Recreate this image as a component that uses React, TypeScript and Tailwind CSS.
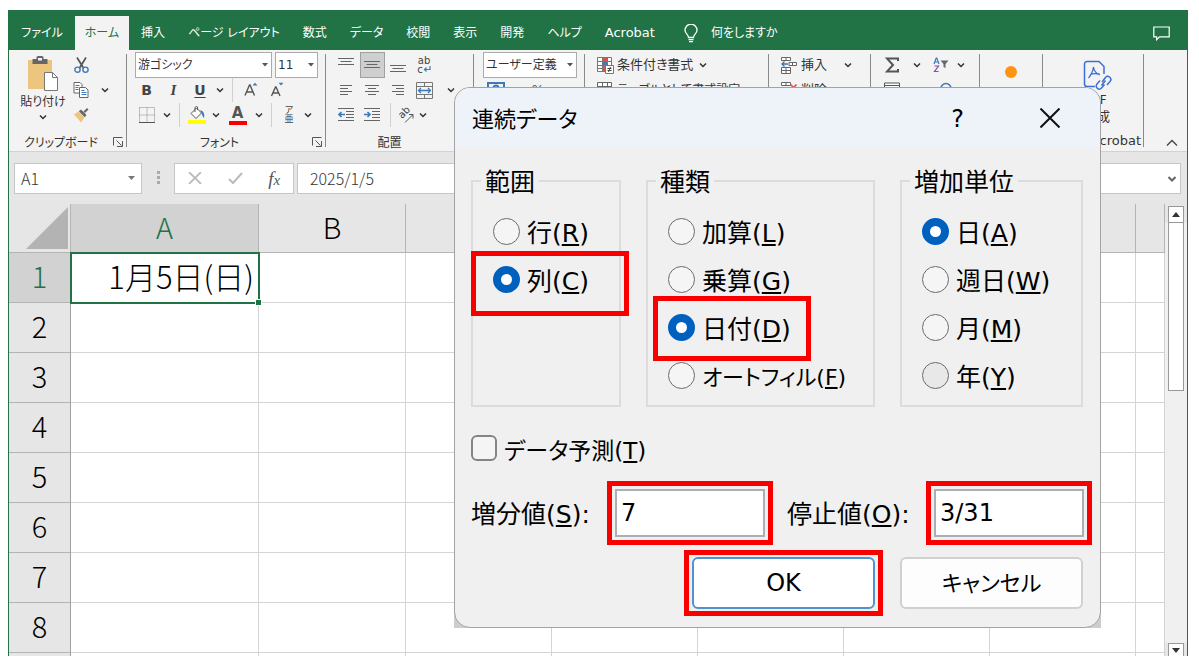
import { ReactNode, useState } from 'react';

const TABS = ['挿入', 'ページ レイアウト', '数式', 'データ', '校閲', '表示', '開発', 'ヘルプ'];
const COLUMNS = ['A', 'B', 'C', 'D', 'E', 'F', 'G', 'H'];
const ROWS = [1, 2, 3, 4, 5, 6, 7, 8, 9];

const RANGE_OPTIONS = [
  { label: '行', accessKey: 'R' },
  { label: '列', accessKey: 'C', marked: true },
];
const TYPE_OPTIONS = [
  { label: '加算', accessKey: 'L' },
  { label: '乗算', accessKey: 'G' },
  { label: '日付', accessKey: 'D', marked: true },
  { label: 'オートフィル', accessKey: 'F', kana: true },
];
const UNIT_OPTIONS = [
  { label: '日', accessKey: 'A' },
  { label: '週日', accessKey: 'W' },
  { label: '月', accessKey: 'M' },
  { label: '年', accessKey: 'Y' },
];

interface Option {
  label: string;
  accessKey: string;
  marked?: boolean;
  kana?: boolean;
}

const Chevron = () => (
  <svg className="w-[14px] shrink-0" height="10" viewBox="0 0 14 10" fill="none" stroke="#333" strokeWidth="1.5">
    <path d="M4 3.5 7 6.5 10 3.5" />
  </svg>
);

const Divider = () => <span className="mx-[5px] h-6 w-px shrink-0 bg-[#d0d0d0]" />;

const Separator = () => <span className="my-1 w-px shrink-0 bg-[#8a8a8a]" />;

const IconButton = ({ label, width = 'w-[26px]', children }: { label: string; width?: string; children: ReactNode }) => (
  <button type="button" aria-label={label} className={`flex h-full shrink-0 items-center justify-center ${width}`}>
    {children}
  </button>
);

const Launcher = () => (
  <svg className="mr-[3px] shrink-0" width="10" height="10" viewBox="0 0 10 10" fill="none" stroke="#555">
    <path d="M.5 8.5v-8h9M3.5 3.5l5 5M9.5 4v5.5H4" />
  </svg>
);

const GroupLabel = ({ text, launcher }: { text: string; launcher?: boolean }) => (
  <div className="mt-1 flex h-5 items-center text-[12px]">
    <span className="flex-1 pt-px text-center whitespace-nowrap">{text}</span>
    {launcher ? <Launcher /> : <span className="w-5" />}
  </div>
);

const RibbonSelect = ({ label, value, className }: { label: string; value: string; className: string }) => (
  <div className={`relative h-[26px] shrink-0 ${className}`}>
    <select aria-label={label} className="h-full w-full appearance-none border border-[#ababab] bg-white pl-[2px] text-[12px]">
      <option>{value}</option>
    </select>
    <svg className="pointer-events-none absolute top-[11px] right-[4px]" width="6" height="4" viewBox="0 0 6 4">
      <path d="M0 0h6L3 3.5z" fill="#555" />
    </svg>
  </div>
);

const Lines = ({ d }: { d: string }) => (
  <svg width="16" height="16" viewBox="0 0 16 16" stroke="#666" fill="none">
    <path d={d} />
  </svg>
);

/* 操作箇所を示す赤枠 */
const Mark = ({ className }: { className: string }) => (
  <span className={`pointer-events-none absolute z-10 border-[5px] border-[#f80000] ${className}`} />
);

const TabBar = () => (
  <nav className="flex h-10 shrink-0 items-end bg-[#217346] text-[12px] text-white">
    <a href="#file" className="flex h-[34px] w-[66px] items-center justify-center">ファイル</a>
    <a href="#home" className="flex h-[34px] w-[54px] items-center justify-center bg-[#f3f3f3] text-[#217346]">ホーム</a>
    <div className="flex h-[34px] items-center gap-[23px] pl-3 whitespace-nowrap">
      {TABS.map((tab) => (
        <a key={tab} href={`#${tab}`}>{tab}</a>
      ))}
      <a href="#acrobat" className="text-[13px]">Acrobat</a>
    </div>
    <label className="ml-[29px] flex h-[34px] items-center gap-[13px]">
      <svg width="14" height="19" viewBox="0 0 14 19" fill="none" stroke="#fff" strokeWidth="1.3">
        <path d="M4.5 13.5c0-3-3.500-3.800-3.500-7.300a6 6 0 0 1 12 0c0 3.500-3.500 4.300-3.500 7.300zM4.500 15.700h5M5 17.700h4" />
      </svg>
      <input aria-label="操作アシスト" className="w-24 placeholder:text-white placeholder:opacity-100" placeholder="何をしますか" />
    </label>
    <button type="button" aria-label="コメント" className="mr-[17px] ml-auto flex h-[34px] items-center">
      <svg width="17" height="15" viewBox="0 0 17 15" fill="none" stroke="#fff" strokeWidth="1.2">
        <path d="M.8 1h15.400v9.800H6.500L3.600 13.700v-2.900H.8z" />
      </svg>
    </button>
  </nav>
);

const ClipboardGroup = () => (
  <div className="w-[117px] shrink-0 pt-[2px]">
    <div className="flex h-[76px]">
      <button type="button" className="ml-[9px] flex w-[50px] flex-col items-center pt-1 text-[12px] whitespace-nowrap">
        <svg width="32" height="36" viewBox="0 0 32 36">
          <path d="M1 4h24v29H1z" fill="#ecc57f" />
          <path d="M5.500 3h4V1.500a1.500 1.500 0 0 1 1.500-1.500h4a1.500 1.500 0 0 1 1.500 1.500V3h4v5h-15z" fill="#666" />
          <path d="M11 2h4v2.500h-4z" fill="#f3f3f3" />
          <path d="M17.500 16.500h8l5 5v13h-13z" fill="#fff" stroke="#777" />
          <path d="M25.500 16.500v5h5" fill="none" stroke="#777" />
        </svg>
        <span className="leading-5">貼り付け</span>
        <Chevron />
      </button>
      <div className="flex flex-col">
        <div className="h-[26px]">
          <IconButton label="切り取り">
            <svg width="15" height="16" viewBox="0 0 15 16" fill="none">
              <path d="M3 .5 9.500 11M12 .5 5.500 11" stroke="#555" strokeWidth="1.700" />
              <circle cx="3.500" cy="12.700" r="2.600" stroke="#3d7ab8" strokeWidth="1.400" />
              <circle cx="11.500" cy="12.700" r="2.600" stroke="#3d7ab8" strokeWidth="1.400" />
            </svg>
          </IconButton>
        </div>
        <div className="flex h-6 items-center">
          <IconButton label="コピー">
            <svg width="16" height="16" viewBox="0 0 16 16" fill="#fff" stroke="#666">
              <path d="M1 .5h6l2 2V11H1z" />
              <path d="M6.500 5.500h6l2.500 2.500v7.500H6.500z" />
              <path d="M2.500 3.500h4M2.500 5.500h3M2.500 7.500h3M8.500 8.500h3M8.500 10.500h5M8.500 12.500h5" stroke="#3d7ab8" />
            </svg>
          </IconButton>
          <span className="ml-1 flex"><Chevron /></span>
        </div>
        <div className="h-[26px]">
          <IconButton label="書式のコピー/貼り付け">
            <svg width="16" height="16" viewBox="0 0 16 16">
              <path d="M1 7.500 5.500 4.500l6 6L8 15.500C6 13 3.500 10 1 7.500z" fill="#ecc57f" />
              <path d="M5.800 4.200 8 2.500l5.500 5.500-1.700 2.200z" fill="#666" />
              <path d="M10.500 4.500 14 1l1.500 1.500L12 6z" fill="#666" />
            </svg>
          </IconButton>
        </div>
      </div>
    </div>
    <GroupLabel text="クリップボード" launcher />
  </div>
);

const FontGroup = () => (
  <div className="w-[198px] shrink-0 pt-[2px]">
    <div className="flex h-[26px] gap-[3px] pl-2">
      <RibbonSelect label="フォント名" value="游ゴシック" className="w-[137px]" />
      <RibbonSelect label="フォント サイズ" value="11" className="w-[43px]" />
    </div>
    <div className="flex h-6 items-center pl-[6px] text-[14px] font-bold text-[#444]">
      <IconButton label="太字" width="w-[27px]">B</IconButton>
      <IconButton label="斜体" width="w-[27px]"><i className="font-['Liberation_Serif',serif] text-[15px]">I</i></IconButton>
      <IconButton label="下線"><u className="underline-offset-2">U</u></IconButton>
      <Chevron />
      <Divider />
      <IconButton label="フォント サイズの拡大">
        <svg width="16" height="16" viewBox="0 0 16 16" fill="none" stroke="#555" strokeWidth="1.400">
          <path d="M2 13.500 6.500 3h.5l4.500 10.500M3.500 10h6.500" />
          <path d="m9.500 3.500 2.500-2.800 2.500 2.800z" fill="#3d7ab8" stroke="none" />
        </svg>
      </IconButton>
      <IconButton label="フォント サイズの縮小">
        <svg width="16" height="16" viewBox="0 0 16 16" fill="none" stroke="#555" strokeWidth="1.400">
          <path d="M2.500 14 6.500 5h.5l4 9M4 11h5.500" />
          <path d="m9.500.700 2.500 2.800 2.500-2.800z" fill="#3d7ab8" stroke="none" />
        </svg>
      </IconButton>
    </div>
    <div className="flex h-[26px] items-center pl-[6px]">
      <IconButton label="罫線" width="w-[27px]">
        <svg width="16" height="16" viewBox="0 0 16 16" fill="none" stroke="#888">
          <path d="M.5.5h15v15M.5.5v15M8 .5v15M.5 8h15" strokeDasharray="1 1" />
          <path d="M0 15.500h16" stroke="#555" />
        </svg>
      </IconButton>
      <Chevron />
      <Divider />
      <IconButton label="塗りつぶしの色" width="w-[24px]">
        <svg width="18" height="18" viewBox="0 0 18 18" fill="none">
          <path d="M3 7.500 8.500 2l5 5-5.500 5.500z" fill="#fff" stroke="#555" />
          <path d="M7 6V1.500A1.500 1.500 0 0 1 9.500 1v3" stroke="#555" />
          <path d="M12 4.500c3 0 5 2.500 4 7.500-1.500-1-1.500-3-2.500-5z" fill="#3d7ab8" />
          <path d="M0 14h18v4H0z" fill="#ffff00" />
        </svg>
      </IconButton>
      <Chevron />
      <IconButton label="フォントの色" width="w-[29px]">
        <span className="w-[18px] border-b-4 border-[#f80000] text-center text-[15px] leading-[15px] font-bold text-[#555]">A</span>
      </IconButton>
      <Chevron />
      <Divider />
      <IconButton label="ふりがなの表示/非表示" width="w-[24px]">
        <span className="flex flex-col text-[9px] leading-[9px] text-[#444]"><span>ア</span><span>亜</span></span>
      </IconButton>
      <Chevron />
    </div>
    <GroupLabel text="フォント" launcher />
  </div>
);

const AlignGroup = () => (
  <div className="w-[147px] shrink-0 pt-[2px]">
    <div className="flex h-[26px] items-center pl-[7px]">
      <IconButton label="上揃え"><Lines d="M0 1.500h16M2.500 4.500h11M0 7.500h16" /></IconButton>
      <IconButton label="上下中央揃え">
        <span className="flex h-[26px] w-[25px] items-center justify-center border border-[#a0a0a0] bg-[#cfcfcf]">
          <Lines d="M0 4.500h16M2.500 7.500h11M0 10.500h16" />
        </span>
      </IconButton>
      <IconButton label="下揃え"><Lines d="M0 8.500h16M2.500 11.500h11M0 14.500h16" /></IconButton>
      <IconButton label="折り返して全体を表示する">
        <span className="flex flex-col text-[10px] leading-[9px] text-[#444]">
          <span>ab</span>
          <span className="flex">
            c
            <svg width="8" height="8" viewBox="0 0 8 8" fill="none" stroke="#3d7ab8" strokeWidth="1.200">
              <path d="M7 1v3.500H1.500M3.500 2.500l-2 2 2 2" />
            </svg>
          </span>
        </span>
      </IconButton>
    </div>
    <div className="flex h-6 items-center pl-[7px]">
      <IconButton label="左揃え"><Lines d="M2 3.500h12M2 6.500h8M2 9.500h12M2 12.500h8" /></IconButton>
      <IconButton label="中央揃え"><Lines d="M1 3.500h14M4 6.500h8M1 9.500h14M4 12.500h8" /></IconButton>
      <IconButton label="右揃え"><Lines d="M2 3.500h12M6 6.500h8M2 9.500h12M6 12.500h8" /></IconButton>
      <IconButton label="セルを結合して中央揃え">
        <svg width="17" height="17" viewBox="0 0 17 17" fill="none" stroke="#777">
          <path d="M.5.5h16v16H.5zM.5 4.500h16M.5 12.500h16M8.500.5v4M8.500 12.500v4" />
          <path d="M2.500 8.500h12M5 6 2.500 8.500 5 11M12 6l2.500 2.500L12 11" stroke="#3d7ab8" strokeWidth="1.300" />
        </svg>
      </IconButton>
      <span className="ml-[7px] flex"><Chevron /></span>
    </div>
    <div className="flex h-[26px] items-center pl-[7px]">
      <IconButton label="インデントを減らす">
        <svg width="16" height="16" viewBox="0 0 16 16" fill="none" stroke="#666">
          <path d="M0 1.500h16M8 4.500h8M8 7.500h8M8 10.500h8M0 13.500h16" />
          <path d="M7 7.500H1M3.500 5 1 7.500 3.500 10" stroke="#3d7ab8" strokeWidth="1.600" />
        </svg>
      </IconButton>
      <IconButton label="インデントを増やす">
        <svg width="16" height="16" viewBox="0 0 16 16" fill="none" stroke="#666">
          <path d="M0 1.500h16M8 4.500h8M8 7.500h8M8 10.500h8M0 13.500h16" />
          <path d="M0 7.500h6M3.500 5 6 7.500 3.500 10" stroke="#3d7ab8" strokeWidth="1.600" />
        </svg>
      </IconButton>
      <Divider />
      <IconButton label="方向" width="w-[20px]">
        <svg width="20" height="20" viewBox="0 0 20 20" fill="none" stroke="#555">
          <text x="0" y="0" transform="translate(6 14) rotate(-45)" fontSize="10" fill="#444" stroke="none">ab</text>
          <path d="M9 17.500 17 9.500M13 9.500h4v4" />
        </svg>
      </IconButton>
      <Chevron />
    </div>
    <GroupLabel text="配置" />
  </div>
);

const NumberGroup = () => (
  <div className="w-[110px] shrink-0 pt-[2px] pl-[9px]">
    <RibbonSelect label="数値の書式" value="ユーザー定義" className="w-[94px]" />
    <div className="flex h-6 items-center gap-4 text-[13px] text-[#555]">
      <IconButton label="通貨表示形式">
        <svg width="18" height="16" viewBox="0 0 18 16" fill="none" stroke="#3d7ab8" strokeWidth="2">
          <path d="M1 1h16v10H1z" />
          <circle cx="9" cy="6" r="2.500" />
        </svg>
      </IconButton>
      <IconButton label="パーセント スタイル">%</IconButton>
    </div>
  </div>
);

const TableIcon = () => (
  <svg width="17" height="17" viewBox="0 0 17 17" fill="#fff" stroke="#666">
    <path d="M.5.5h14v14H.5zM.5 4.500h14M.5 8.500h14M5.500.5v14M10.500.5v14" />
  </svg>
);

const StyleGroup = () => (
  <div className="w-[183px] shrink-0 pt-[2px] pl-3 text-[13px] whitespace-nowrap">
    <button type="button" className="flex h-[26px] items-center gap-[3px]">
      <svg width="17" height="17" viewBox="0 0 17 17" fill="#fff" stroke="#777">
        <path d="M.5.5h14v14H.5zM.5 4.500h14M.5 8.500h14M.5 11.500h5M5.500.5v14M10.500.5v14" />
        <path d="M6 1h4v3H6z" fill="#d9534a" stroke="none" />
        <path d="M6 5h4v3H6z" fill="#3d7ab8" stroke="none" />
        <path d="M6 9h2v5H6z" fill="#d9534a" stroke="none" />
        <path d="M8.500 8.500h8v8h-8z" />
        <path d="M10.500 11.500h4M10.500 13.500h4M13.500 10l-2 5" stroke="#444" />
      </svg>
      <span>条件付き書式</span>
      <Chevron />
    </button>
    <button type="button" className="flex h-6 items-center gap-[3px] text-[12px]">
      <TableIcon />
      <span>テーブルとして書式設定</span>
    </button>
  </div>
);

const CellsGroup = () => (
  <div className="w-[101px] shrink-0 pt-[2px] pl-3 text-[13px] whitespace-nowrap">
    <button type="button" className="flex h-[26px] items-center gap-1">
      <svg width="16" height="17" viewBox="0 0 16 17" fill="#fff" stroke="#666">
        <path d="M.5.5h9v3h-9zM5 .5v3M.5 10.500h9v6h-9zM5 10.500v6M.5 13.500h9" />
        <path d="M8 5.500h7.500v3H8zM11.500 5.500v3" />
        <path d="M7 7H1M3.500 4.500 1 7l2.500 2.500" fill="none" stroke="#3d7ab8" strokeWidth="1.400" />
      </svg>
      <span>挿入</span>
      <span className="ml-[10px] flex"><Chevron /></span>
    </button>
    <button type="button" className="flex h-6 items-center gap-1">
      <svg width="16" height="17" viewBox="0 0 16 17" fill="#fff" stroke="#666">
        <path d="M.5.5h9v3h-9zM5 .5v3M.5 10.500h9v6h-9zM5 10.500v6M.5 13.500h9" />
        <path d="m9.500 2.500 6 6M15.500 2.500l-6 6" fill="none" stroke="#d9534a" strokeWidth="1.600" />
      </svg>
      <span>削除</span>
    </button>
  </div>
);

const EditGroup = () => (
  <div className="w-[108px] shrink-0 pt-[2px] pl-2">
    <div className="flex h-[26px] items-center">
      <IconButton label="オート SUM">
        <svg width="14" height="16" viewBox="0 0 14 16" fill="none" stroke="#555" strokeWidth="2">
          <path d="M13 4V1.500H2L8 8l-6 6.500h11V12" />
        </svg>
      </IconButton>
      <span className="ml-[5px] flex"><Chevron /></span>
      <span className="ml-1 flex h-full">
        <IconButton label="並べ替えとフィルター">
          <svg width="16" height="16" viewBox="0 0 16 16" fill="none">
            <path d="M1 7 3.200 1h.6L6 7M1.800 5h3.400" stroke="#3d7ab8" strokeWidth="1.200" />
            <path d="M1.500 9H5.500L1.500 14.500h4" stroke="#8a4aa8" strokeWidth="1.200" />
            <path d="M7.500 3.500h8L12.500 7v4l-2-1V7z" fill="#666" />
          </svg>
        </IconButton>
      </span>
      <Chevron />
    </div>
    <div className="flex h-6 items-center gap-[27px]">
      <IconButton label="フィル">
        <svg width="16" height="16" viewBox="0 0 16 16" fill="#fff" stroke="#555">
          <path d="M.5 1h15v14H.5zM.5 3.500h15" />
          <path d="M8 5.500v7M5 9.500l3 3 3-3" stroke="#3d7ab8" fill="none" />
        </svg>
      </IconButton>
      <IconButton label="検索と選択">
        <svg width="16" height="16" viewBox="0 0 16 16" fill="none" stroke="#3d7ab8" strokeWidth="1.600">
          <circle cx="9" cy="6.500" r="5" />
          <path d="m5 10-4 4.500" />
        </svg>
      </IconButton>
    </div>
  </div>
);

const AcrobatGroup = () => (
  <div className="flex w-[100px] shrink-0 flex-col pt-[2px] text-[13px]">
    <button type="button" className="flex h-[76px] flex-col items-center gap-[1px] pt-2 pl-2">
      <svg className="shrink-0" width="29" height="31" viewBox="0 0 29 31" fill="none" stroke="#3c6fd6" strokeWidth="1.500">
        <path d="M12 26.500H4A2.500 2.500 0 0 1 1.500 24V4A2.500 2.500 0 0 1 4 1.500h12l5 5V14" />
        <path d="M10.500 7c-.5 4-2 7.500-5 11M10.500 7c.5 4 2.500 6.500 6.500 8M7 14.500c3-1.200 6-1.200 9.500-.5" strokeWidth="1.300" />
        <path d="m19 22 3.500-4.500a3 3 0 0 1 4.500 4L24 25M22.500 20.500l-4 5M21.500 24.500l-3 3.500a3 3 0 0 1-4.500-4l3-3.500" />
      </svg>
      <span className="pr-1 text-[12px] leading-4">PDF</span>
      <span className="leading-4">作成</span>
    </button>
    <div className="mt-1 flex h-5 items-center justify-end pr-[2px]">Adobe Acrobat</div>
  </div>
);

const Ribbon = () => (
  <div className="flex h-[102px] shrink-0 overflow-hidden border-b border-[#d2d2d2] bg-[#f3f3f3] text-[#333]">
    <ClipboardGroup />
    <Separator />
    <FontGroup />
    <Separator />
    <AlignGroup />
    <Separator />
    <NumberGroup />
    <Separator />
    <StyleGroup />
    <Separator />
    <CellsGroup />
    <Separator />
    <EditGroup />
    <Separator />
    <div className="flex w-[62px] shrink-0 justify-center pt-4">
      <span className="size-3 rounded-full bg-[#ff9410]" />
    </div>
    <Separator />
    <AcrobatGroup />
    <Separator />
    <button type="button" aria-label="リボンを折りたたむ" className="mr-[9px] mb-1 ml-auto self-end">
      <svg width="12" height="8" viewBox="0 0 12 8" fill="none" stroke="#444" strokeWidth="1.300">
        <path d="m1 6.500 5-5 5 5" />
      </svg>
    </button>
  </div>
);

const FormulaBar = () => (
  <div className="flex h-[52px] shrink-0 items-center bg-[#e6e6e6] pr-[6px] pl-[5px] font-['Noto_Sans_CJK_JP',sans-serif] text-[16px] font-light text-[#333] [font-feature-settings:normal]">
    <div className="relative h-[31px] w-32 shrink-0">
      <input aria-label="名前ボックス" defaultValue="A1" className="h-full w-full border border-[#c6c6c6] bg-white pl-[6px]" />
      <svg className="pointer-events-none absolute top-[13px] right-[7px]" width="7" height="4" viewBox="0 0 7 4">
        <path d="M0 0h7L3.500 4z" fill="#777" />
      </svg>
    </div>
    <svg className="mx-[14px] shrink-0" width="4" height="14" viewBox="0 0 4 14" fill="#aaa">
      <path d="M1 0h3v3H1zM1 5h3v3H1zM1 10h3v3H1z" />
    </svg>
    <div className="flex h-[31px] w-[120px] shrink-0 items-center justify-around border border-[#c6c6c6] bg-white">
      <button type="button" aria-label="キャンセル">
        <svg width="14" height="12" viewBox="0 0 14 12" fill="none" stroke="#bbb" strokeWidth="1.800">
          <path d="m1 0 12 12M13 0 1 12" />
        </svg>
      </button>
      <button type="button" aria-label="入力">
        <svg width="15" height="12" viewBox="0 0 15 12" fill="none" stroke="#bbb" strokeWidth="2">
          <path d="m1 7 4 4L14 1" />
        </svg>
      </button>
      <button type="button" aria-label="関数の挿入" className="font-['Liberation_Serif',serif] text-[19px] leading-none font-normal text-[#555] italic">
        f<span className="text-[15px]">x</span>
      </button>
    </div>
    <div className="relative ml-[3px] h-[31px] flex-1">
      <input aria-label="数式バー" defaultValue="2025/1/5" className="h-full w-full border border-[#c6c6c6] bg-white pl-3" />
      <svg className="absolute top-[13px] right-[5px]" width="8" height="6" viewBox="0 0 8 6" fill="none" stroke="#666" strokeWidth="2">
        <path d="m.5 1 3.500 3.500L7.500 1" />
      </svg>
    </div>
  </div>
);

const Sheet = () => (
  <div className="flex min-h-0 flex-1 bg-[#e6e6e6]">
    <div className="min-w-0 flex-1 overflow-hidden">
      <table className="w-full table-fixed border-separate border-spacing-0 font-['Noto_Sans_CJK_JP',sans-serif] text-[29px] leading-none font-light text-black [font-feature-settings:normal]">
        <colgroup>
          <col className="w-[62px]" />
          <col className="w-[188px]" />
          <col className="w-[147px]" />
          {COLUMNS.slice(2, 7).map((col) => (
            <col key={col} className="w-[146px]" />
          ))}
          <col />
        </colgroup>
        <thead>
          <tr className="h-[49px]">
            <th className="border-r border-b border-[#b4b4b4] p-0">
              <svg className="mr-[2px] ml-auto" width="42" height="42" viewBox="0 0 42 42">
                <path d="M42 0v42H0z" fill="#b3b3b3" />
              </svg>
            </th>
            {COLUMNS.map((col, i) => (
              <th
                key={col}
                className={`overflow-hidden border-r border-b border-[#b4b4b4] p-0 pb-1 font-light ${i === 0 ? 'bg-[#d2d2d2] text-[#217346]' : ''}`}
              >
                {i < 7 ? col : ''}
              </th>
            ))}
          </tr>
        </thead>
        <tbody>
          {ROWS.map((row) => (
            <tr key={row} className="h-[50px]">
              <th
                scope="row"
                className={`border-r border-b border-r-[#a0a0a0] border-b-[#b4b4b4] p-0 pb-1 font-light ${row === 1 ? 'bg-[#d2d2d2] text-[#217346]' : ''}`}
              >
                {row < 9 ? row : ''}
              </th>
              {COLUMNS.map((col) => (
                <td key={col} className="relative border-r border-b border-[#d4d4d4] bg-white p-0">
                  {row === 1 && col === 'A' && (
                    <>
                      <div className="pr-1 pb-1 text-right text-[31px] leading-none whitespace-nowrap">1月5日(日)</div>
                      <span className="absolute -top-px -right-[2px] -bottom-[2px] -left-px z-10 border-2 border-[#217346]" />
                      <span className="absolute -right-[3px] -bottom-[3px] z-10 size-[5px] bg-[#217346] outline-1 outline-white" />
                    </>
                  )}
                </td>
              ))}
            </tr>
          ))}
        </tbody>
      </table>
    </div>
    <div className="flex w-[22px] shrink-0 flex-col items-center pt-[2px]">
      <button type="button" aria-label="上へスクロール" className="flex h-[17px] w-4 items-center justify-center border border-[#999] bg-white">
        <svg width="8" height="5" viewBox="0 0 8 5"><path d="M0 5h8L4 0z" fill="#333" /></svg>
      </button>
      <div className="flex w-full flex-1 justify-center bg-[#f0f0f0]">
        <span className="h-[168px] w-4 border border-t-0 border-[#999] bg-white" />
      </div>
      <button type="button" aria-label="下へスクロール" className="flex h-[13px] w-4 items-center justify-center border border-b-0 border-[#999] bg-white">
        <svg width="8" height="5" viewBox="0 0 8 5"><path d="M0 0h8L4 5z" fill="#333" /></svg>
      </button>
    </div>
  </div>
);

const KeyHint = ({ text }: { text: string }) => (
  <>
    (<span className="underline decoration-2 underline-offset-2">{text}</span>)
  </>
);

const RadioGroup = ({ title, options, initial, className }: { title: string; options: Option[]; initial: string; className: string }) => {
  const [value, setValue] = useState(initial);

  return (
    <fieldset className={`shrink-0 border-2 border-[#dcdcdc] pb-[6px] ${className}`}>
      <legend className="ml-2 px-1 pt-1 leading-6">{title}</legend>
      <div className="pt-3">
        {options.map(({ label, accessKey, marked, kana }) => (
          <label key={accessKey} className="relative flex h-12 items-center gap-[7px] pl-5 whitespace-nowrap">
            <input
              type="radio"
              name={title}
              checked={value === accessKey}
              onChange={() => setValue(accessKey)}
              className={`size-[27px] shrink-0 appearance-none rounded-full border border-[#6b6b6b] checked:border-8 checked:border-[#0060bd] checked:bg-white ${accessKey === 'Y' ? 'bg-[#e8e8e8]' : 'bg-[#f5f5f5]'}`}
            />
            <span className={`pt-[6px] leading-8 ${kana ? 'text-[22px]' : ''}`}>{label}<KeyHint text={accessKey} /></span>
            {marked && <Mark className={title === '範囲' ? '-top-1 -left-[2px] h-[65px] w-[158px]' : '-top-[7px] left-[5px] h-[65px] w-[158px]'} />}
          </label>
        ))}
      </div>
    </fieldset>
  );
};

const SeriesDialog = () => (
  <div
    role="dialog"
    aria-label="連続データ"
    className="absolute top-[87px] left-[454px] w-[647px] rounded-t-2xl bg-[#cdcdcd] text-[25px] text-black"
  >
    <div className="overflow-hidden rounded-2xl border border-[#a3a3a3] bg-[#f0f0f0]">
      <header className="flex h-[60px] items-center bg-[#eef3f9] pl-[17px]">
        <h1 className="flex-1 pt-1 text-[22px] leading-8">連続データ</h1>
        <button type="button" aria-label="ヘルプ" className="mr-[76px] pt-[2px] text-[24px] leading-8">?</button>
        <button type="button" aria-label="閉じる" className="mr-[40px]">
          <svg width="20" height="20" viewBox="0 0 20 20" fill="none" stroke="#111" strokeWidth="2">
            <path d="m.5.500 19 19M19.500.500l-19 19" />
          </svg>
        </button>
      </header>
      <form className="px-4 pt-[19px] pb-[18px]" onSubmit={(e) => e.preventDefault()}>
        <div className="flex gap-[25px]">
          <RadioGroup title="範囲" options={RANGE_OPTIONS} initial="C" className="w-[150px]" />
          <RadioGroup title="種類" options={TYPE_OPTIONS} initial="D" className="w-[229px]" />
          <RadioGroup title="増加単位" options={UNIT_OPTIONS} initial="A" className="w-[183px]" />
        </div>
        <label className="mt-[21px] flex h-10 w-fit items-center gap-[7px]">
          <input type="checkbox" className="size-[26px] appearance-none rounded-md border-2 border-[#858585] bg-[#f5f5f5]" />
          <span className="pt-[6px] text-[23px] leading-8">データ予測<KeyHint text="T" /></span>
        </label>
        <div className="mt-[21px] flex items-center whitespace-nowrap">
          <label htmlFor="step" className="w-[145px] pt-1">増分値<KeyHint text="S" />:</label>
          <span className="relative">
            <input id="step" defaultValue="7" className="block h-12 w-[150px] border-2 border-[#adadb5] bg-white px-1 text-[24px]" />
            <Mark className="-inset-2" />
          </span>
          <label htmlFor="stop" className="ml-[22px] w-[148px] pt-1">停止値<KeyHint text="O" />:</label>
          <span className="relative">
            <input id="stop" defaultValue="3/31" className="block h-12 w-[150px] border-2 border-[#adadb5] bg-white px-1 text-[24px]" />
            <Mark className="-inset-2" />
          </span>
        </div>
        <div className="mt-5 flex justify-end gap-[25px] pr-[1px]">
          <span className="relative">
            <button type="submit" className="block h-[52px] w-[183px] rounded-md border-2 border-[#4f93d2] bg-white text-[24px]">OK</button>
            <Mark className="-inset-x-2 -inset-y-[7px]" />
          </span>
          <button type="button" className="h-[52px] w-[183px] rounded-md border-2 border-[#d0d0d0] bg-[#fdfdfd] text-[22px]">キャンセル</button>
        </div>
      </form>
    </div>
  </div>
);

const App: React.FC = () => {
  return (
    <div className="relative flex h-screen overflow-hidden bg-white pt-[10px] pr-[11px] pb-2 pl-2 font-['DejaVu_Sans','Noto_Sans_CJK_JP',sans-serif] [font-feature-settings:'palt']">
      <main className="flex min-w-0 flex-1 flex-col overflow-hidden border-x border-[#217346]">
        <TabBar />
        <Ribbon />
        <FormulaBar />
        <Sheet />
      </main>
      <SeriesDialog />
    </div>
  );
};

export default App;
